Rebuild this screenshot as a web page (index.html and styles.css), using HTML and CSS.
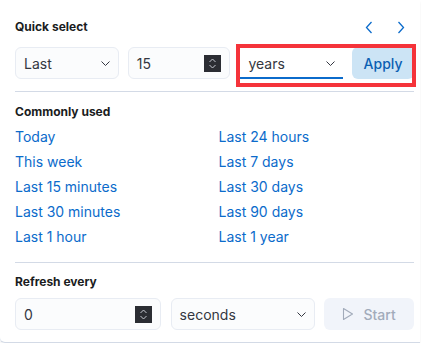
FILE: index.html
```html
<!DOCTYPE html>
<html lang="en">
  <head>
    <meta charset="UTF-8" />
    <title>Quick select</title>
    <link rel="stylesheet" href="styles.css">
  </head>
  <body>
    <div class="panel">
      <!-- Quick select -->
      <div class="head">
        <span class="title">Quick select</span>
        <div class="arrows">
          <svg width="8" height="13" viewBox="0 0 8 13"><path d="M6.5 1 L1.5 6.5 L6.5 12" fill="none" stroke="#0b6bcb" stroke-width="1.3"/></svg>
          <svg width="8" height="13" viewBox="0 0 8 13"><path d="M1.5 1 L6.5 6.5 L1.5 12" fill="none" stroke="#0b6bcb" stroke-width="1.3"/></svg>
        </div>
      </div>

      <div class="row row-quick">
        <div class="field select w-last">
          <span>Last</span>
          <svg class="caret" width="9" height="5" viewBox="0 0 9 5"><path d="M0.5 0.5 L4.5 4.5 L8.5 0.5" fill="none" stroke="#343741" stroke-width="1"/></svg>
        </div>
        <div class="field number w-num">
          <span>15</span>
          <span class="spin"><svg width="17" height="17" viewBox="0 0 17 17"><path d="M5.5 7 L8.5 4 L11.5 7 M5.5 10 L8.5 13 L11.5 10" fill="none" stroke="#c5c8d0" stroke-width="1"/></svg></span>
        </div>
        <div class="field select focused w-unit">
          <span>years</span>
          <svg class="caret" width="9" height="5" viewBox="0 0 9 5"><path d="M0.5 0.5 L4.5 4.5 L8.5 0.5" fill="none" stroke="#343741" stroke-width="1"/></svg>
        </div>
        <button class="apply">Apply</button>
      </div>
      <div class="mark"></div>

      <hr class="sep" />

      <!-- Commonly used -->
      <div class="title title-common">Commonly used</div>
      <div class="links">
        <a href="#">Today</a>
        <a href="#">Last 24 hours</a>
        <a href="#">This week</a>
        <a href="#">Last 7 days</a>
        <a href="#">Last 15 minutes</a>
        <a href="#">Last 30 days</a>
        <a href="#">Last 30 minutes</a>
        <a href="#">Last 90 days</a>
        <a href="#">Last 1 hour</a>
        <a href="#">Last 1 year</a>
      </div>

      <hr class="sep sep-bottom" />

      <!-- Refresh -->
      <div class="title title-refresh">Refresh every</div>
      <div class="row row-refresh">
        <div class="field number w-interval">
          <span>0</span>
          <span class="spin"><svg width="17" height="17" viewBox="0 0 17 17"><path d="M5.5 7 L8.5 4 L11.5 7 M5.5 10 L8.5 13 L11.5 10" fill="none" stroke="#c5c8d0" stroke-width="1"/></svg></span>
        </div>
        <div class="field select w-seconds">
          <span>seconds</span>
          <svg class="caret" width="9" height="5" viewBox="0 0 9 5"><path d="M0.5 0.5 L4.5 4.5 L8.5 0.5" fill="none" stroke="#343741" stroke-width="1"/></svg>
        </div>
        <button class="start" disabled>
          <svg width="12" height="14" viewBox="0 0 12 14"><path d="M1.5 1.5 L10.5 7 L1.5 12.5 Z" fill="none" stroke="#a2abba" stroke-width="1.1" stroke-linejoin="round"/></svg>
          Start
        </button>
      </div>
    </div>
  </body>
</html>
```

FILE: styles.css
```css
/* Global Styles */
body {
  font-family: "Inter", "Noto Sans", sans-serif;
  background-color: #fff;
  margin: 0;
  padding: 0;
  color: #343741;
  overflow: hidden;
}

/* Popover panel */
.panel {
  position: relative;
  width: 421px;
  box-sizing: border-box;
  padding: 19px 6px 12px 15px;
  border-bottom: 1px solid #d3dae6;
  border-left: 1px solid #e6ebf2;
  border-bottom-left-radius: 6px;
  box-shadow: 0 2px 3px rgba(0, 0, 0, 0.06);
  margin-left: -1px;
}

.head {
  display: flex;
  justify-content: space-between;
  align-items: center;
}

.title {
  font-size: 12px;
  line-height: 16px;
  font-weight: 700;
  color: #1a1c21;
}

.arrows {
  display: flex;
  gap: 24px;
  padding-right: 9px;
}

.row {
  display: flex;
  align-items: center;
}

.row-quick {
  margin-top: 12px;
}

.field {
  height: 32px;
  box-sizing: border-box;
  display: flex;
  align-items: center;
  justify-content: space-between;
  padding: 0 8px;
  background-color: #fbfcfd;
  border: 1px solid #e8ecf3;
  border-radius: 6px;
  font-size: 14px;
}

.focused {
  background-color: #fff;
  border: none;
  border-radius: 0;
  border-bottom: 2px solid #0b6bcb;
  padding-top: 2px;
}

.spin {
  display: block;
  width: 17px;
  height: 17px;
  background-color: #2b2d33;
}

.spin svg {
  display: block;
}

.w-last { width: 104px; margin-right: 9px; }
.w-num { width: 103px; margin-right: 10px; }
.w-unit { width: 103px; margin-right: 9px; }
.w-interval { width: 146px; margin-right: 10px; }
.w-seconds { width: 145px; margin-right: 9px; }

button {
  font-family: inherit;
  height: 32px;
  border: none;
  border-radius: 6px;
  font-size: 14px;
  font-weight: 500;
}

.apply {
  width: 62px;
  background-color: #cce4f5;
  color: #0b5fb3;
}

.start {
  width: 90px;
  display: flex;
  align-items: center;
  justify-content: center;
  gap: 9px;
  background-color: #f1f4fa;
  color: #a2abba;
}

/* Red highlight over the unit + apply */
.mark {
  position: absolute;
  left: 236px;
  top: 44px;
  width: 180px;
  height: 43px;
  box-sizing: border-box;
  border: 4px solid #f5333a;
}

.sep {
  border: none;
  border-top: 1px solid #d3dae6;
  margin: 12px 0 0;
}

.sep-bottom {
  margin-top: 15px;
}

.title-common {
  margin-top: 12px;
}

.links {
  display: grid;
  grid-template-columns: 1fr 1fr;
  column-gap: 8px;
  row-gap: 5px;
  margin-top: 7px;
}

.links a {
  font-size: 14px;
  line-height: 20px;
  color: #0b6bcb;
  text-decoration: none;
}

.title-refresh {
  margin-top: 11px;
}

.row-refresh {
  margin-top: 8px;
}
```
